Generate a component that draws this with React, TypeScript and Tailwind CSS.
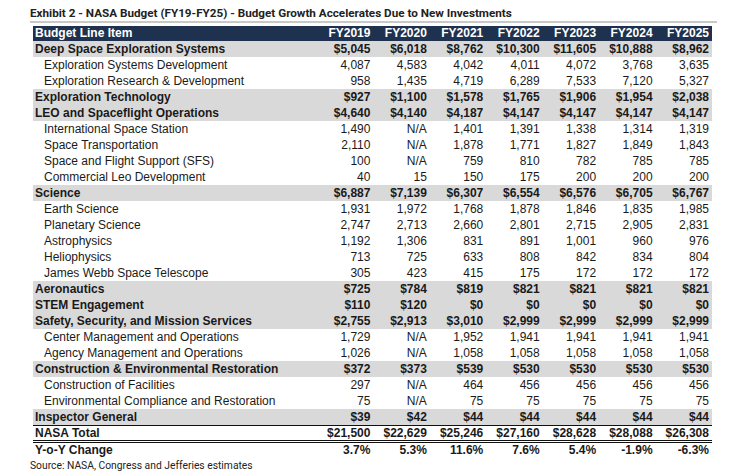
const years = ["FY2019", "FY2020", "FY2021", "FY2022", "FY2023", "FY2024", "FY2025"];

type Row = { label: string; values: string[]; kind: "group" | "item" };

const g = (label: string, values: string): Row => ({ label, values: values.split(" "), kind: "group" });
const i = (label: string, values: string): Row => ({ label, values: values.split(" "), kind: "item" });

const rows: Row[] = [
  g("Deep Space Exploration Systems", "$5,045 $6,018 $8,762 $10,300 $11,605 $10,888 $8,962"),
  i("Exploration Systems Development", "4,087 4,583 4,042 4,011 4,072 3,768 3,635"),
  i("Exploration Research & Development", "958 1,435 4,719 6,289 7,533 7,120 5,327"),
  g("Exploration Technology", "$927 $1,100 $1,578 $1,765 $1,906 $1,954 $2,038"),
  g("LEO and Spaceflight Operations", "$4,640 $4,140 $4,187 $4,147 $4,147 $4,147 $4,147"),
  i("International Space Station", "1,490 N/A 1,401 1,391 1,338 1,314 1,319"),
  i("Space Transportation", "2,110 N/A 1,878 1,771 1,827 1,849 1,843"),
  i("Space and Flight Support (SFS)", "100 N/A 759 810 782 785 785"),
  i("Commercial Leo Development", "40 15 150 175 200 200 200"),
  g("Science", "$6,887 $7,139 $6,307 $6,554 $6,576 $6,705 $6,767"),
  i("Earth Science", "1,931 1,972 1,768 1,878 1,846 1,835 1,985"),
  i("Planetary Science", "2,747 2,713 2,660 2,801 2,715 2,905 2,831"),
  i("Astrophysics", "1,192 1,306 831 891 1,001 960 976"),
  i("Heliophysics", "713 725 633 808 842 834 804"),
  i("James Webb Space Telescope", "305 423 415 175 172 172 172"),
  g("Aeronautics", "$725 $784 $819 $821 $821 $821 $821"),
  g("STEM Engagement", "$110 $120 $0 $0 $0 $0 $0"),
  g("Safety, Security, and Mission Services", "$2,755 $2,913 $3,010 $2,999 $2,999 $2,999 $2,999"),
  i("Center Management and Operations", "1,729 N/A 1,952 1,941 1,941 1,941 1,941"),
  i("Agency Management and Operations", "1,026 N/A 1,058 1,058 1,058 1,058 1,058"),
  g("Construction & Environmental Restoration", "$372 $373 $539 $530 $530 $530 $530"),
  i("Construction of Facilities", "297 N/A 464 456 456 456 456"),
  i("Environmental Compliance and Restoration", "75 N/A 75 75 75 75 75"),
  g("Inspector General", "$39 $42 $44 $44 $44 $44 $44"),
];

const total = ["$21,500", "$22,629", "$25,246", "$27,160", "$28,628", "$28,088", "$26,308"];
const yoy = ["3.7%", "5.3%", "11.6%", "7.6%", "5.4%", "-1.9%", "-6.3%"];

const grid = "grid grid-cols-[284px_repeat(7,1fr)] items-center";

export default function App() {
  return (
    <div className="w-[735px] h-[474px] bg-white overflow-hidden">
      <div className="pl-[30px] pt-[5px] w-[717px]">
        {/* Title */}
        <div className="h-[16px] leading-[16px] text-[11.7px] font-bold text-[#222] font-['Roboto',sans-serif]">
          Exhibit 2 - NASA Budget (FY19-FY25) - Budget Growth Accelerates Due to New Investments
        </div>
        <div className="h-[2px] bg-[#c8c8c8]" />

        {/* Table */}
        <div className="ml-[3px] mt-[3px] w-[679px] font-['Liberation_Sans',Arial,sans-serif] text-[12px] text-[#1a1a1a]">
          <div className={`${grid} h-[15px] leading-[15px] bg-[#1e3250] text-white font-bold`}>
            <div className="pl-[2px]">Budget Line Item</div>
            {years.map((y) => (
              <div key={y} className="text-right pr-[3px]">{y}</div>
            ))}
          </div>

          {rows.map((r) => (
            <div
              key={r.label}
              className={`${grid} h-[16px] leading-[16px] ${r.kind === "group" ? "bg-[#d9d9d9] font-bold" : "bg-white"}`}
            >
              <div className={r.kind === "group" ? "pl-[2px]" : "pl-[11px]"}>{r.label}</div>
              {r.values.map((v, idx) => (
                <div key={idx} className="text-right pr-[3px]">{v}</div>
              ))}
            </div>
          ))}

          <div className={`${grid} h-[18px] leading-[14px] font-bold border-t border-b-[3px] border-double border-[#111]`}>
            <div className="pl-[2px]">NASA Total</div>
            {total.map((v, idx) => (
              <div key={idx} className="text-right pr-[3px]">{v}</div>
            ))}
          </div>
          <div className={`${grid} h-[15px] leading-[15px] font-bold`}>
            <div className="pl-[2px]">Y-o-Y Change</div>
            {yoy.map((v, idx) => (
              <div key={idx} className="text-right pr-[3px]">{v}</div>
            ))}
          </div>
        </div>

        {/* Source */}
        <div className="h-[14px] leading-[14px] mt-[1px] text-[10.3px] text-[#222] font-['Roboto',sans-serif]">
          Source: NASA, Congress and Jefferies estimates
        </div>
      </div>
    </div>
  );
}
